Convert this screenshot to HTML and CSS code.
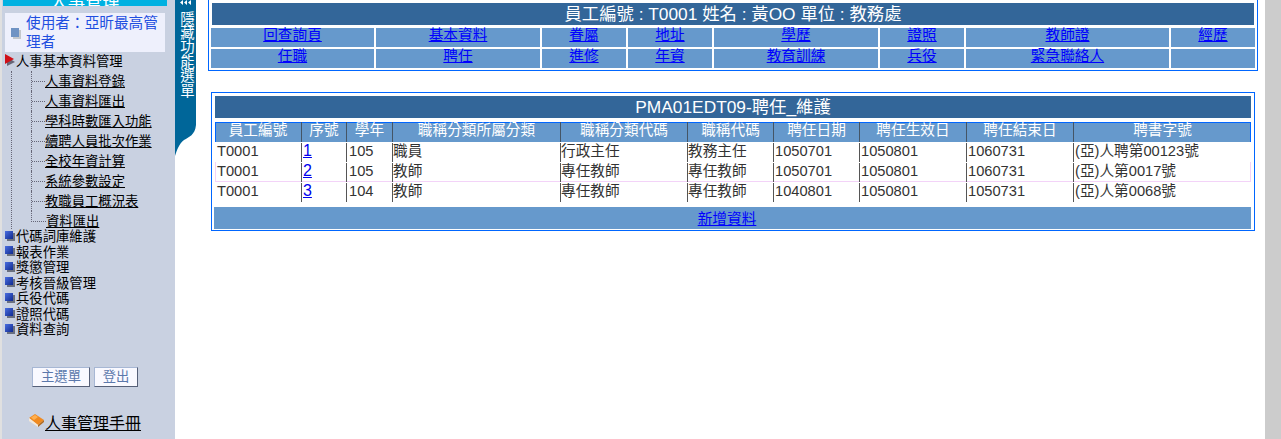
FILE: index.html
```html
<!DOCTYPE html>
<html lang="zh-Hant">
<head>
<meta charset="utf-8">
<title>人事管理</title>
<link rel="stylesheet" href="styles.css">
</head>
<body>
<div class="app">
  <aside class="sidebar">
    <div class="side-title"><span>人事管理</span></div>
    <div class="user-box"><i class="user-icon"></i><span class="user-text">使用者：亞昕最高管理者</span></div>
    <div class="menu-row menu-open"><svg class="tri" width="11" height="12" viewBox="0 0 11 12"><path d="M2 3 L10 8 L2 12Z" fill="#667"/><path d="M0 0 L9 5 L0 10Z" fill="#d01018"/></svg><span>人事基本資料管理</span></div>
    <div class="tree">
      <ul class="sub">
        <li><a href="#">人事資料登錄</a></li>
        <li><a href="#">人事資料匯出</a></li>
        <li><a href="#">學科時數匯入功能</a></li>
        <li><a href="#">續聘人員批次作業</a></li>
        <li><a href="#">全校年資計算</a></li>
        <li><a href="#">系統參數設定</a></li>
        <li><a href="#">教職員工概況表</a></li>
        <li><a href="#">資料匯出</a></li>
      </ul>
    </div>
    <div class="menu-row"><i class="sq"></i><span>代碼詞庫維護</span></div>
    <div class="menu-row"><i class="sq"></i><span>報表作業</span></div>
    <div class="menu-row"><i class="sq"></i><span>獎懲管理</span></div>
    <div class="menu-row"><i class="sq"></i><span>考核晉級管理</span></div>
    <div class="menu-row"><i class="sq"></i><span>兵役代碼</span></div>
    <div class="menu-row"><i class="sq"></i><span>證照代碼</span></div>
    <div class="menu-row"><i class="sq"></i><span>資料查詢</span></div>
    <div class="side-btns"><button class="btn btn-main">主選單</button><button class="btn btn-out">登出</button></div>
    <div class="manual">
      <svg class="book" width="17" height="15" viewBox="0 0 17 15"><path d="M1 5 L7 1 L16 7 L10 12Z" fill="#f08a20"/><path d="M1 5 L10 12 L10 14 L1 8Z" fill="#f4e8d8"/><path d="M10 12 L16 7 L16 9 L10 14Z" fill="#b06a20"/><path d="M3 4.500 L7 2 L10 4 L6 7Z" fill="#ffb050"/></svg>
      <a href="#">人事管理手冊</a>
    </div>
  </aside>

  <div class="toggle">
    <svg class="arrows" width="12" height="6" viewBox="0 0 12 6"><path d="M3 0 L0 2.500 L3 5Z M7 0 L4 2.500 L7 5Z M11 0 L8 2.500 L11 5Z" fill="#fff"/></svg>
    <span class="toggle-text">隱藏功能選單</span>
  </div>

  <main class="main">
    <section class="panel-top">
      <h1 class="title-top">員工編號 : T0001 姓名 : 黃OO 單位 : 教務處</h1>
      <nav class="nav-grid">
        <a href="#">回查詢頁</a><a href="#">基本資料</a><a href="#">眷屬</a><a href="#">地址</a><a href="#">學歷</a><a href="#">證照</a><a href="#">教師證</a><a href="#">經歷</a>
        <a href="#">任職</a><a href="#">聘任</a><a href="#">進修</a><a href="#">年資</a><a href="#">教育訓練</a><a href="#">兵役</a><a href="#">緊急聯絡人</a><span></span>
      </nav>
    </section>

    <section class="panel-data">
      <h2 class="title-data">PMA01EDT09-聘任_維護</h2>
      <div class="row head">
        <div>員工編號</div><div>序號</div><div>學年</div><div>職稱分類所屬分類</div><div>職稱分類代碼</div><div>職稱代碼</div><div>聘任日期</div><div>聘任生效日</div><div>聘任結束日</div><div>聘書字號</div>
      </div>
      <div class="row body">
        <div>T0001</div><div><a href="#">1</a></div><div>105</div><div>職員</div><div>行政主任</div><div>教務主任</div><div>1050701</div><div>1050801</div><div>1060731</div><div>(亞)人聘第00123號</div>
      </div>
      <div class="row body hover">
        <div>T0001</div><div><a href="#">2</a></div><div>105</div><div>教師</div><div>專任教師</div><div>專任教師</div><div>1050701</div><div>1050801</div><div>1060731</div><div>(亞)人第0017號</div>
      </div>
      <div class="row body">
        <div>T0001</div><div><a href="#">3</a></div><div>104</div><div>教師</div><div>專任教師</div><div>專任教師</div><div>1040801</div><div>1050801</div><div>1050731</div><div>(亞)人第0068號</div>
      </div>
      <div class="add-row"><a href="#">新增資料</a></div>
    </section>
  </main>
  <div class="scroll-strip"></div>
</div>
</body>
</html>
```

FILE: styles.css
```css
* { box-sizing: border-box; }
html, body { margin: 0; padding: 0; height: 100%; overflow: hidden; background: #fff; }
body { font-family: "Liberation Sans", "Noto Sans CJK TC", sans-serif; font-size: 14.67px; color: #333; }
a { color: #0000ee; }
h1, h2 { margin: 0; font-weight: normal; }
ul { list-style: none; margin: 0; padding: 0; }

.app { display: flex; height: 439px; overflow: hidden; }

/* sidebar */
.sidebar { width: 175px; flex: none; height: 439px; background: #c9d1e1; border-left: 2px solid #e0e0e0; padding-left: 1px; color: #000; font-size: 13.33px; display: flex; flex-direction: column; }
.side-title { width: 164px; height: 6px; background: #00b1e1; color: #fff; font-size: 17.33px; text-align: center; display: flex; justify-content: center; align-items: flex-end; overflow: hidden; flex: none; }
.side-title span { display: block; height: 18px; line-height: 18px; flex: none; margin-bottom: -5px; }
.user-box { margin: 7px 0 0 2px; width: 160px; height: 39px; background: #eef0fc; display: flex; align-items: center; padding-left: 6px; flex: none; }
.user-icon { width: 8px; height: 9px; background: #6f93c4; box-shadow: 2px 2px 0 #c4c8cc; margin-right: 7px; flex: none; }
.user-text { color: #1f4fe0; font-size: 14.67px; line-height: 19px; width: 135px; }

.menu-row { height: 15.5px; line-height: 15.5px; display: flex; align-items: center; padding-left: 2px; white-space: nowrap; flex: none; }
.menu-row span { margin-left: 3px; }
.menu-open { height: 19px; line-height: 19px; }
.tri { flex: none; margin-top: -4px; margin-right: -3px; }
.sq { width: 8px; height: 8px; flex: none; background: linear-gradient(135deg, #4a6ee0, #102a90); box-shadow: 2px 2px 0 #6a7080; margin: -4px 0 0 0; }

.tree { height: 158px; margin-left: 8px; border-left: 1px dotted #667; padding-left: 19px; flex: none; }
.sub li { height: 20px; display: flex; align-items: flex-start; border-left: 1px dotted #667; white-space: nowrap; }
.sub li::before { content: ""; width: 13px; height: 10px; border-bottom: 1px dotted #667; flex: none; }
.sub li:last-child { height: 18px; border-left: 0; }
.sub li:last-child::before { width: 14px; border-left: 1px dotted #667; }
.sub a { color: #000; line-height: 21px; }

.side-btns { display: flex; gap: 4px; margin: 29px 0 0 29px; flex: none; }
.btn { height: 20px; padding: 0; font: inherit; font-size: 13.33px; line-height: 16px; color: #5b78ab; background: #f9f9ff; border: 1px solid; border-color: #a7b7d4 #566078 #566078 #a7b7d4; }
.btn-main { width: 58px; }
.btn-out { width: 44px; }

.manual { margin: 23px 0 0 25px; display: flex; align-items: center; font-size: 16px; flex: none; }
.manual a { color: #000; }
.book { flex: none; margin-top: -3px; }

/* toggle */
.toggle { width: 21px; height: 156px; flex: none; background: #006699; color: #fff; display: flex; flex-direction: column; align-items: center; clip-path: path("M0 0 H21 V125 C20 135 14 137 9 140 C4 144 2 150 0 156 Z"); }
.arrows { flex: none; margin-bottom: 5px; }
.toggle-text { writing-mode: vertical-rl; font-size: 14.4px; line-height: 21px; letter-spacing: 0; }

/* main */
.main { width: 1069px; flex: none; padding: 0 0 0 12px; }
.panel-top { width: 1050px; height: 71px; margin-top: 0; border: 1px solid #0066ff; border-top: 0; padding: 3px 0 0 2px; }
.title-top { width: 1042px; margin-left: 1px; height: 22px; background: #336699; color: #fff; font-size: 17.33px; line-height: 22px; text-align: center; }
.nav-grid { margin-top: 3px; display: grid; grid-template-columns: 163px 164px 84px 84px 164px 84px 203px 84px; column-gap: 2px; row-gap: 2px; grid-auto-rows: 19px; }
.nav-grid a, .nav-grid span { background: #6699cc; color: #0000ff; text-align: center; line-height: 15px; font-size: 14.67px; }

.panel-data { width: 1044px; height: 139px; margin: 21px 0 0 3px; border: 1px solid #0066ff; padding: 3px 3px 0 2px; }
.title-data { width: 1036px; margin-left: 1px; height: 22px; background: #336699; color: #fff; font-size: 17.33px; line-height: 22px; text-align: center; }
.row { margin-left: 1px; width: 1036px; display: grid; grid-template-columns: 86px 45px 46px 168px 127px 86px 86px 107px 107px 178px; }
.head { margin-top: 4px; height: 20px; background: #6699cc; box-shadow: inset 1px 1px 0 #0066ff, inset -1px 0 0 #0066ff; color: #fff; text-align: center; line-height: 17px; }
.head div { border-left: 1px solid #445566; }
.head div:first-child { border-left: 0; }
.body { height: 20px; padding-top: 1px; line-height: 16px; }
.body div { height: 19px; border-left: 1px solid #555; padding-left: 1px; white-space: nowrap; }
.body div:first-child { border-left: 0; padding-left: 2px; }
.body div:nth-child(3) { padding-left: 2px; }
.body div:nth-child(n+4):nth-child(-n+6) { padding-left: 0; }
.body a { color: #0000ee; font-size: 16px; }
.hover { box-shadow: inset 1px 0 0 #f3d3f8, inset -1px 0 0 #f3d3f8, inset 0 -1px 0 #f3d3f8; }
.add-row { margin-top: 5px; height: 22px; background: #6699cc; text-align: center; line-height: 24px; padding-right: 11px; }
.add-row a { color: #0000ff; }

.scroll-strip { margin-left: auto; width: 16px; flex: none; height: 439px; background: #cccccc; }
```
